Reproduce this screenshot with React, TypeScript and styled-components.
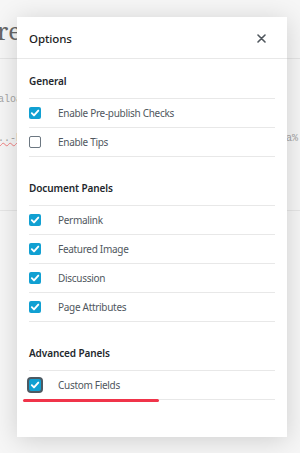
import React from 'react';
import styled, { createGlobalStyle } from 'styled-components';

const GlobalStyle = createGlobalStyle`
  html, body {
    margin: 0;
    padding: 0;
    background: #f6f6f6;
  }
  body {
    font-family: 'Noto Sans', 'Open Sans', sans-serif;
    overflow: hidden;
  }
`;

type Option = { label: string; checked: boolean; focused?: boolean; marked?: boolean };

const sections: { title: string; options: Option[] }[] = [
  {
    title: 'General',
    options: [
      { label: 'Enable Pre-publish Checks', checked: true },
      { label: 'Enable Tips', checked: false },
    ],
  },
  {
    title: 'Document Panels',
    options: [
      { label: 'Permalink', checked: true },
      { label: 'Featured Image', checked: true },
      { label: 'Discussion', checked: true },
      { label: 'Page Attributes', checked: true },
    ],
  },
  {
    title: 'Advanced Panels',
    options: [{ label: 'Custom Fields', checked: true, focused: true, marked: true }],
  },
];

const Check = () => (
  <svg width="10" height="10" viewBox="0 0 10 10">
    <path d="M1.8 5.2 L4 7.4 L8.3 2.6" fill="none" stroke="#fff" strokeWidth="1.9" strokeLinecap="round" strokeLinejoin="round" />
  </svg>
);

const CloseIcon = () => (
  <svg width="9" height="9" viewBox="0 0 9 9">
    <path d="M1 1 L8 8 M8 1 L1 8" stroke="#50575e" strokeWidth="1.6" strokeLinecap="round" />
  </svg>
);

export default function App() {
  return (
    <>
      <GlobalStyle />
      <Page>
        <TitleBar>
          <PageTitle>re</PageTitle>
        </TitleBar>
        <CodeArea>
          <CodeLine>aloa</CodeLine>
          <CodeLine>
            <Squiggle>..-ba</Squiggle>
            <CodeRight>a%</CodeRight>
          </CodeLine>
        </CodeArea>
        <Divider />
      </Page>

      <Modal>
        <Header>
          <Title>Options</Title>
          <CloseButton type="button" aria-label="Close">
            <CloseIcon />
          </CloseButton>
        </Header>
        <Body>
          {sections.map((section, i) => (
            <Section key={section.title} first={i === 0}>
              <SectionTitle>{section.title}</SectionTitle>
              {section.options.map((opt) => (
                <Row key={opt.label}>
                  <Box checked={opt.checked} focused={opt.focused}>
                    {opt.checked && <Check />}
                  </Box>
                  <RowLabel>{opt.label}</RowLabel>
                  {opt.marked && <Marker />}
                </Row>
              ))}
            </Section>
          ))}
        </Body>
      </Modal>
    </>
  );
}

const Page = styled.div`
  width: 300px;
  height: 453px;
  background: #f6f6f6;
  overflow: hidden;
`;

const TitleBar = styled.div`
  height: 58px;
  border-bottom: 1px solid #e4e4e4;
  display: flex;
  align-items: flex-start;
`;

const PageTitle = styled.div`
  margin: 17px 0 0 -3px;
  font-family: 'Noto Serif', 'DejaVu Serif', serif;
  font-size: 24px;
  line-height: 28px;
  color: #666;
`;

const CodeArea = styled.div`
  padding-top: 34px;
  height: 117px;
  font-family: 'Liberation Mono', monospace;
  font-size: 10px;
  color: #a5a5a5;
`;

const CodeLine = styled.div`
  display: flex;
  justify-content: space-between;
  height: 39px;
  line-height: 14px;
  margin-left: -2px;
`;

const Squiggle = styled.span`
  text-decoration: underline wavy #f08080;
  text-decoration-thickness: 1px;
`;

const CodeRight = styled.span`
  margin-right: 2px;
`;

const Divider = styled.div`
  border-top: 1px solid #e6e6e6;
`;

const Modal = styled.div`
  position: absolute;
  top: 17px;
  left: 17px;
  width: 270px;
  background: #fff;
  box-shadow: 0 3px 24px rgba(0, 0, 0, 0.16);
  padding-bottom: 37px;
`;

const Header = styled.div`
  height: 42px;
  padding: 2px 21px 0 12px;
  box-sizing: border-box;
  border-bottom: 1px solid #e8e8e8;
  display: flex;
  align-items: center;
  justify-content: space-between;
`;

const Title = styled.h1`
  margin: 0;
  font-size: 11.5px;
  font-weight: 500;
  letter-spacing: -0.1px;
  color: #1e1e1e;
`;

const CloseButton = styled.button`
  border: 0;
  background: none;
  padding: 0;
  width: 9px;
  height: 9px;
  display: flex;
`;

const Body = styled.div`
  padding: 0 12px;
`;

const Section = styled.div<{ first: boolean }>`
  margin-top: ${(p) => (p.first ? '14px' : '23px')};
`;

const SectionTitle = styled.h2`
  margin: 0;
  font-size: 10px;
  font-weight: 600;
  letter-spacing: -0.1px;
  line-height: 16px;
  color: #23282d;
  padding-bottom: 9px;
  border-bottom: 1px solid #e8e8e8;
`;

const Row = styled.div`
  position: relative;
  height: 28px;
  display: flex;
  align-items: center;
  border-bottom: 1px solid #e8e8e8;
`;

const Box = styled.span<{ checked: boolean; focused?: boolean }>`
  width: 12px;
  height: 12px;
  box-sizing: border-box;
  border-radius: 2px;
  display: flex;
  align-items: center;
  justify-content: center;
  background: ${(p) => (p.checked ? '#11a0d2' : '#fff')};
  border: ${(p) => (p.checked ? 'none' : '1.5px solid #6c7781')};
  box-shadow: ${(p) => (p.focused ? '0 0 0 2px #4d5962' : 'none')};
`;

const RowLabel = styled.span`
  margin-left: 17px;
  font-size: 10px;
  letter-spacing: -0.3px;
  color: #50575e;
`;

const Marker = styled.span`
  position: absolute;
  left: -6px;
  bottom: -3px;
  width: 136px;
  height: 3.5px;
  border-radius: 2px;
  background: #f0344a;
`;
